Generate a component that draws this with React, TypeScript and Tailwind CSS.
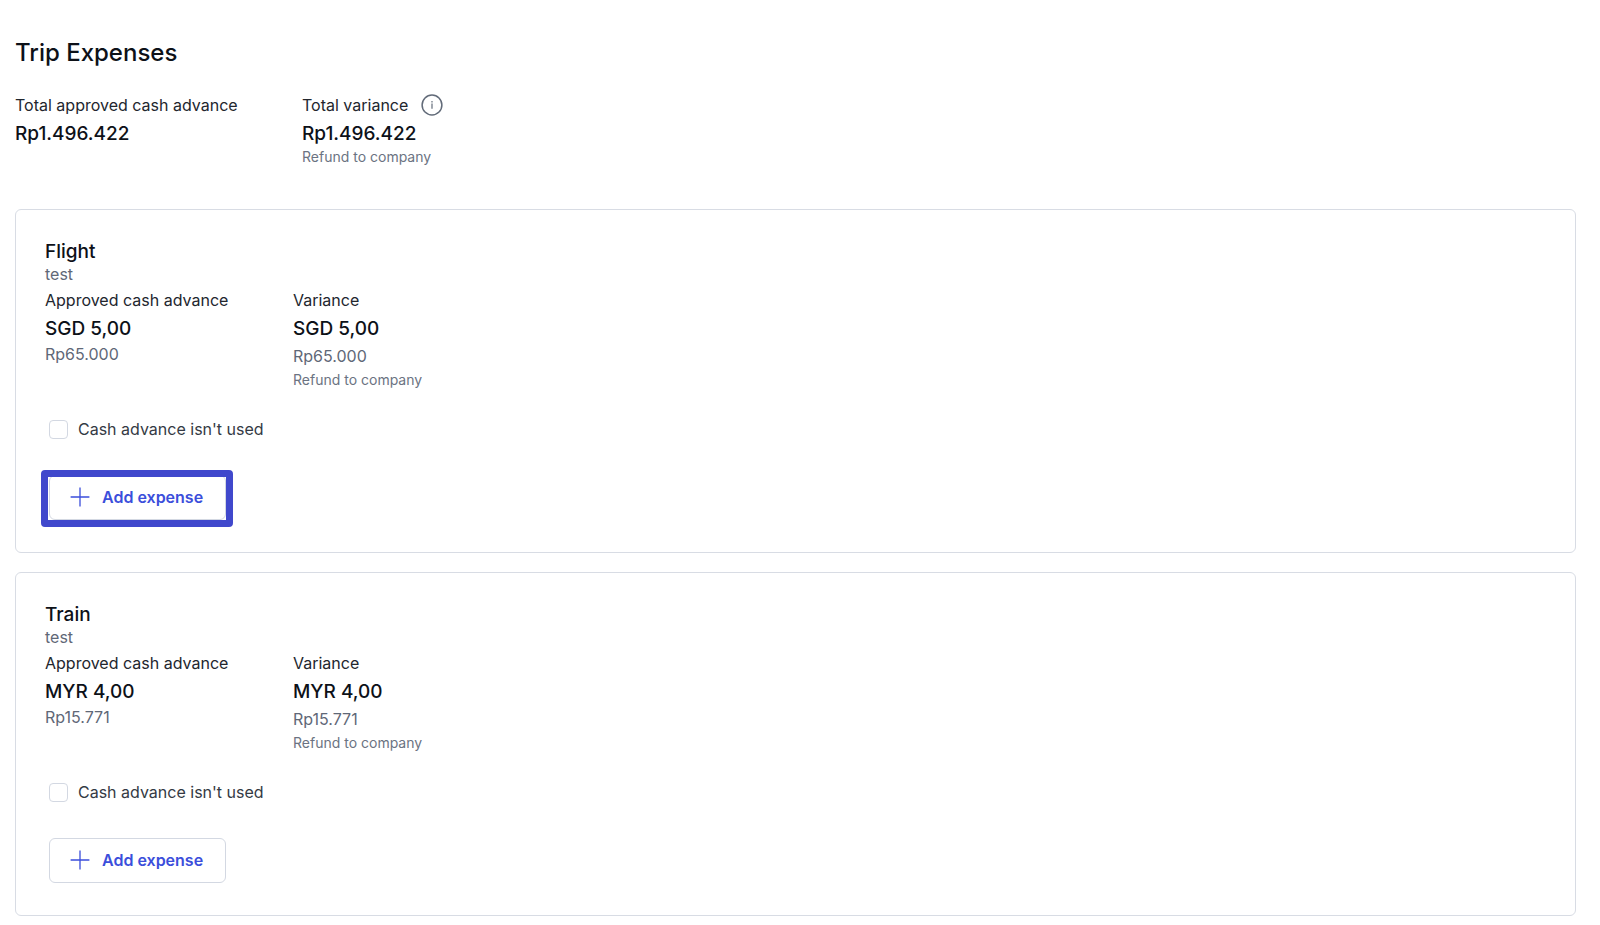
import React, { useId } from 'react';

interface Expense {
  title: string;
  note: string;
  amount: string;
  converted: string;
  highlighted?: boolean;
}

const expenses: Expense[] = [
  { title: 'Flight', note: 'test', amount: 'SGD 5,00', converted: 'Rp65.000', highlighted: true },
  { title: 'Train', note: 'test', amount: 'MYR 4,00', converted: 'Rp15.771' },
];

const InfoIcon: React.FC = () => (
  <svg className="h-6 w-6 text-[#626b79]" viewBox="0 0 24 24" fill="none" stroke="currentColor" strokeWidth={1.5}>
    <circle cx="12" cy="12" r="9.9" />
    <path strokeWidth={1.2} d="M12 10.6v5.2" />
    <path strokeWidth={1.2} d="M12 8v1.4" />
  </svg>
);

const PlusIcon: React.FC = () => (
  <svg className="h-5 w-5 shrink-0" viewBox="0 0 20 20" fill="none" stroke="currentColor" strokeWidth={1.3}>
    <path d="M10 0.6v18.8M0.6 10h18.8" />
  </svg>
);

const Amount: React.FC<{ children: string }> = ({ children }) => (
  <p className="mt-1 text-[19px] leading-[26px] font-medium">{children}</p>
);

const ExpenseCard: React.FC<{ expense: Expense }> = ({ expense }) => {
  const id = useId();

  return (
    <section className="rounded-md border border-[#d8dce4] px-[29px] pt-[29px] pb-8">
      <h2 className="text-[19px] leading-[25px] font-medium">{expense.title}</h2>
      <p className="leading-5 text-[#5f6877]">{expense.note}</p>

      <div className="mt-1 flex">
        <div className="w-[248px]">
          <p className="text-[#22262e]">Approved cash advance</p>
          <Amount>{expense.amount}</Amount>
          <p className="text-[#5f6877]">{expense.converted}</p>
        </div>
        <div>
          <p className="text-[#22262e]">Variance</p>
          <Amount>{expense.amount}</Amount>
          <p className="mt-0.5 text-[#5f6877]">{expense.converted}</p>
          <p className="mt-0.5 text-sm text-[#6b7382]">Refund to company</p>
        </div>
      </div>

      <div className="mt-[27px] ml-1 flex items-center gap-2.5">
        <input
          id={id}
          type="checkbox"
          className="h-[19px] w-[19px] appearance-none rounded border border-[#d3d8e2] bg-white checked:bg-[#4048cc]"
        />
        <label htmlFor={id} className="text-[#343a44]">Cash advance isn't used</label>
      </div>

      <div className="relative mt-[34px] ml-1 w-fit">
        <button
          type="button"
          className="flex h-[45px] items-center gap-3 rounded-md border border-[#d3d8e2] bg-white pr-[22px] pb-0.5 pl-5 font-semibold text-[#3b4edb]"
        >
          <PlusIcon />
          Add expense
        </button>
        {expense.highlighted && (
          <span className="pointer-events-none absolute -top-[5px] -right-[7px] -bottom-[7px] -left-2 rounded-sm border-[7px] border-[#4048cc]" />
        )}
      </div>
    </section>
  );
};

const App: React.FC = () => (
  <main className="min-h-screen bg-white pt-[37px] pr-6 pb-2 pl-[15px] font-[Inter,sans-serif] text-base text-[#0d1118]">
    <h1 className="text-2xl font-medium">Trip Expenses</h1>

    <div className="mt-6 flex">
      <div className="w-[287px]">
        <p className="text-[#22262e]">Total approved cash advance</p>
        <Amount>Rp1.496.422</Amount>
      </div>
      <div>
        <div className="flex items-center gap-3">
          <p className="text-[#22262e]">Total variance</p>
          <InfoIcon />
        </div>
        <Amount>Rp1.496.422</Amount>
        <p className="text-sm text-[#6b7382]">Refund to company</p>
      </div>
    </div>

    <div className="mt-[42px] flex flex-col gap-[19px]">
      {expenses.map((expense) => (
        <ExpenseCard key={expense.title} expense={expense} />
      ))}
    </div>
  </main>
);

export default App;
